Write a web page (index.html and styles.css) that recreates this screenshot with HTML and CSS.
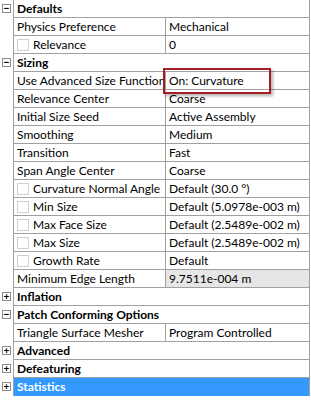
FILE: index.html
```html
<!DOCTYPE html>
<html lang="en">
<head>
    <meta charset="UTF-8">
    <title>Mesh Details</title>
    <link rel="stylesheet" href="styles.css">
</head>
<body>
    <div class="details">
        <!-- Defaults -->
        <div class="row cat"><div class="gutter"><span class="tog">&minus;</span></div><div class="name">Defaults</div></div>
        <div class="row"><div class="gutter"></div><div class="name">Physics Preference</div><div class="val">Mechanical</div></div>
        <div class="row"><div class="gutter"></div><div class="name"><span class="chk"></span>Relevance</div><div class="val">0</div></div>

        <!-- Sizing -->
        <div class="row cat"><div class="gutter"><span class="tog">&minus;</span></div><div class="name">Sizing</div></div>
        <div class="row"><div class="gutter"></div><div class="name">Use Advanced Size Function</div><div class="val">On: Curvature</div></div>
        <div class="row"><div class="gutter"></div><div class="name">Relevance Center</div><div class="val">Coarse</div></div>
        <div class="row"><div class="gutter"></div><div class="name">Initial Size Seed</div><div class="val">Active Assembly</div></div>
        <div class="row"><div class="gutter"></div><div class="name">Smoothing</div><div class="val">Medium</div></div>
        <div class="row"><div class="gutter"></div><div class="name">Transition</div><div class="val">Fast</div></div>
        <div class="row"><div class="gutter"></div><div class="name">Span Angle Center</div><div class="val">Coarse</div></div>
        <div class="row"><div class="gutter"></div><div class="name"><span class="chk"></span>Curvature Normal Angle</div><div class="val">Default (30.0 °)</div></div>
        <div class="row"><div class="gutter"></div><div class="name"><span class="chk"></span>Min Size</div><div class="val">Default (5.0978e-003 m)</div></div>
        <div class="row"><div class="gutter"></div><div class="name"><span class="chk"></span>Max Face Size</div><div class="val">Default (2.5489e-002 m)</div></div>
        <div class="row"><div class="gutter"></div><div class="name"><span class="chk"></span>Max Size</div><div class="val">Default (2.5489e-002 m)</div></div>
        <div class="row"><div class="gutter"></div><div class="name"><span class="chk"></span>Growth Rate</div><div class="val">Default</div></div>
        <div class="row"><div class="gutter"></div><div class="name">Minimum Edge Length</div><div class="val readonly">9.7511e-004 m</div></div>

        <div class="row cat"><div class="gutter"><span class="tog">+</span></div><div class="name">Inflation</div></div>

        <div class="row cat"><div class="gutter"><span class="tog">&minus;</span></div><div class="name">Patch Conforming Options</div></div>
        <div class="row"><div class="gutter"></div><div class="name">Triangle Surface Mesher</div><div class="val">Program Controlled</div></div>

        <div class="row cat"><div class="gutter"><span class="tog">+</span></div><div class="name">Advanced</div></div>
        <div class="row cat"><div class="gutter"><span class="tog">+</span></div><div class="name">Defeaturing</div></div>
        <div class="row cat selected"><div class="gutter"><span class="tog">+</span></div><div class="name">Statistics</div></div>

        <!-- highlight drawn over the value cell -->
        <div class="callout"></div>
    </div>
</body>
</html>
```

FILE: styles.css
```css
body {
    margin: 0;
    background: #fff;
    font-family: Lato, "Open Sans", sans-serif;
    font-size: 12px;
    color: #000;
}

.details {
    position: relative;
    width: 310px;
}

.row {
    display: flex;
    height: 18px;
}

.gutter {
    width: 13px;
    flex: none;
    border-right: 1px solid #a0a0a0;
    position: relative;
}

.tog {
    position: absolute;
    left: 2px;
    top: 4px;
    width: 7px;
    height: 7px;
    border: 1px solid #8c8c8c;
    background: #fff;
    font-family: "DejaVu Sans Mono", monospace;
    font-size: 9px;
    font-weight: bold;
    line-height: 7px;
    text-align: center;
    color: #000;
}

.name,
.val {
    box-sizing: border-box;
    height: 18px;
    border-bottom: 1px solid #a0a0a0;
    padding-left: 3px;
    line-height: 17px;
    white-space: nowrap;
    overflow: hidden;
    display: flex;
    align-items: center;
}

.name {
    width: 152px;
    flex: none;
    border-right: 1px solid #a0a0a0;
}

.val {
    width: 144px;
    flex: none;
    border-right: 1px solid #a0a0a0;
}

.val.readonly {
    background: #e6e6e6;
}

.cat .name {
    width: 296px;
    font-weight: bold;
}

.selected .name {
    background: #3399ff;
    color: #fff;
    border-bottom-color: #3399ff;
}

.chk {
    box-sizing: border-box;
    width: 12px;
    height: 12px;
    border: 1px solid #cfcfcf;
    margin-right: 4px;
    flex: none;
}

.callout {
    position: absolute;
    left: 163px;
    top: 68px;
    width: 104px;
    height: 22px;
    border: 2px solid #a31f26;
    box-shadow: 2px 2px 3px rgba(0, 0, 0, 0.3);
}
```
